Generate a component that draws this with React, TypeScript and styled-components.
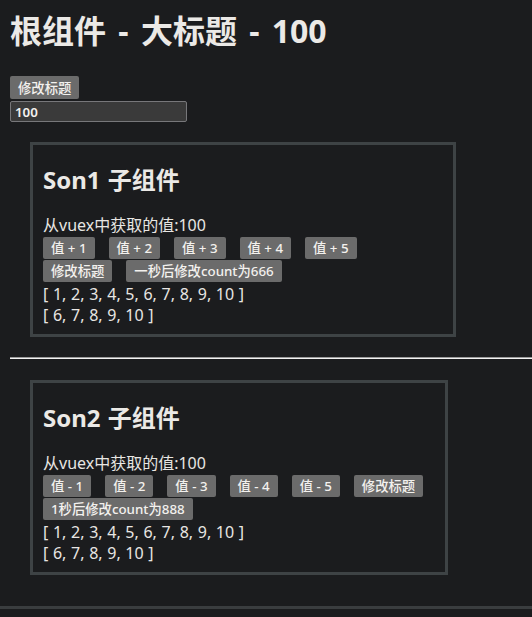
import React from "react";
import styled, { createGlobalStyle } from "styled-components";

const Global = createGlobalStyle`
  html, body { margin: 0; padding: 0; background: #1b1c1e; }
  body {
    color: #e8e6e3;
    font-family: "Noto Sans", "Noto Sans CJK SC", sans-serif;
    font-size: 16px;
    overflow: hidden;
  }
`;

const Page = styled.div`
  width: 532px;
  min-height: 617px;
  background: #1b1c1e;
  display: flex;
  flex-direction: column;
`;

const Main = styled.div`
  padding: 0 0 0 10px;
  display: flex;
  flex-direction: column;
`;

const Title = styled.h1`
  margin: 10px 0 24px 0;
  font-size: 32px;
  line-height: 42px;
  font-weight: 700;
  word-spacing: 4px;
  color: #ebe9e6;
  white-space: nowrap;
`;

const Controls = styled.div`
  display: flex;
  flex-direction: column;
  align-items: flex-start;
  gap: 2px;
`;

const Btn = styled.button`
  height: 22px;
  padding: 0 8px;
  border: none;
  border-radius: 2px;
  background: #6b6b6b;
  color: #f3f1ee;
  font-family: "Noto Sans", "Noto Sans CJK SC", sans-serif;
  font-size: 13.33px;
  font-weight: 500;
  line-height: 22px;
  white-space: nowrap;
  cursor: pointer;
`;

const TopBtn = styled(Btn)`
  height: 23px;
`;

const Input = styled.input`
  box-sizing: border-box;
  width: 177px;
  height: 21px;
  padding: 0 4px;
  border: 1px solid #77777a;
  border-radius: 2px;
  background: #3a3a3a;
  color: #f3f1ee;
  font-family: "Noto Sans", "Noto Sans CJK SC", sans-serif;
  font-size: 13.33px;
  font-weight: 600;
  outline: none;
`;

const Box = styled.div<{ $w: number; $mt: number }>`
  box-sizing: border-box;
  width: ${(p) => p.$w}px;
  margin: ${(p) => p.$mt}px 0 0 20px;
  border: 3px solid #3e4345;
  padding: 19px 10px 8px 10px;
  display: flex;
  flex-direction: column;
`;

const SubTitle = styled.h2`
  margin: 0 0 19px 0;
  font-size: 24px;
  line-height: 32px;
  font-weight: 700;
  word-spacing: 1px;
  color: #ebe9e6;
  white-space: nowrap;
`;

const Line = styled.div`
  font-size: 16px;
  line-height: 21px;
  word-spacing: 0.5px;
  white-space: nowrap;
`;

const BtnGroup = styled.div`
  display: flex;
  flex-direction: column;
  gap: 1px;
  margin: 1px 0 2px 0;
`;

const BtnRow = styled.div`
  display: flex;
  column-gap: 14px;
`;

const Rule = styled.hr`
  margin: 20px 0 0 0;
  border: none;
  border-top: 1px solid #9a9a9a;
  border-bottom: 1px solid #f2f2f2;
  height: 0;
`;

const BottomLine = styled.div`
  margin-top: 31px;
  height: 3px;
  background: #3a3d3f;
`;

const arr = [1, 2, 3, 4, 5, 6, 7, 8, 9, 10];
const filtered = arr.filter((n) => n > 5);

export default function App() {
  return (
    <Page>
      <Global />
      <Main>
        <Title>根组件 - 大标题 - 100</Title>
        <Controls>
          <TopBtn>修改标题</TopBtn>
          <Input defaultValue="100" />
        </Controls>
        <Box $w={426} $mt={20}>
          <SubTitle>Son1 子组件</SubTitle>
          <Line>从vuex中获取的值:100</Line>
          <BtnGroup>
            <BtnRow>
              {[1, 2, 3, 4, 5].map((n) => (
                <Btn key={n}>值 + {n}</Btn>
              ))}
            </BtnRow>
            <BtnRow>
              <Btn>修改标题</Btn>
              <Btn>一秒后修改count为666</Btn>
            </BtnRow>
          </BtnGroup>
          <Line>[ {arr.join(", ")} ]</Line>
          <Line>[ {filtered.join(", ")} ]</Line>
        </Box>
        <Rule />
        <Box $w={418} $mt={21}>
          <SubTitle>Son2 子组件</SubTitle>
          <Line>从vuex中获取的值:100</Line>
          <BtnGroup>
            <BtnRow>
              {[1, 2, 3, 4, 5].map((n) => (
                <Btn key={n}>值 - {n}</Btn>
              ))}
              <Btn>修改标题</Btn>
            </BtnRow>
            <BtnRow>
              <Btn>1秒后修改count为888</Btn>
            </BtnRow>
          </BtnGroup>
          <Line>[ {arr.join(", ")} ]</Line>
          <Line>[ {filtered.join(", ")} ]</Line>
        </Box>
      </Main>
      <BottomLine />
    </Page>
  );
}
